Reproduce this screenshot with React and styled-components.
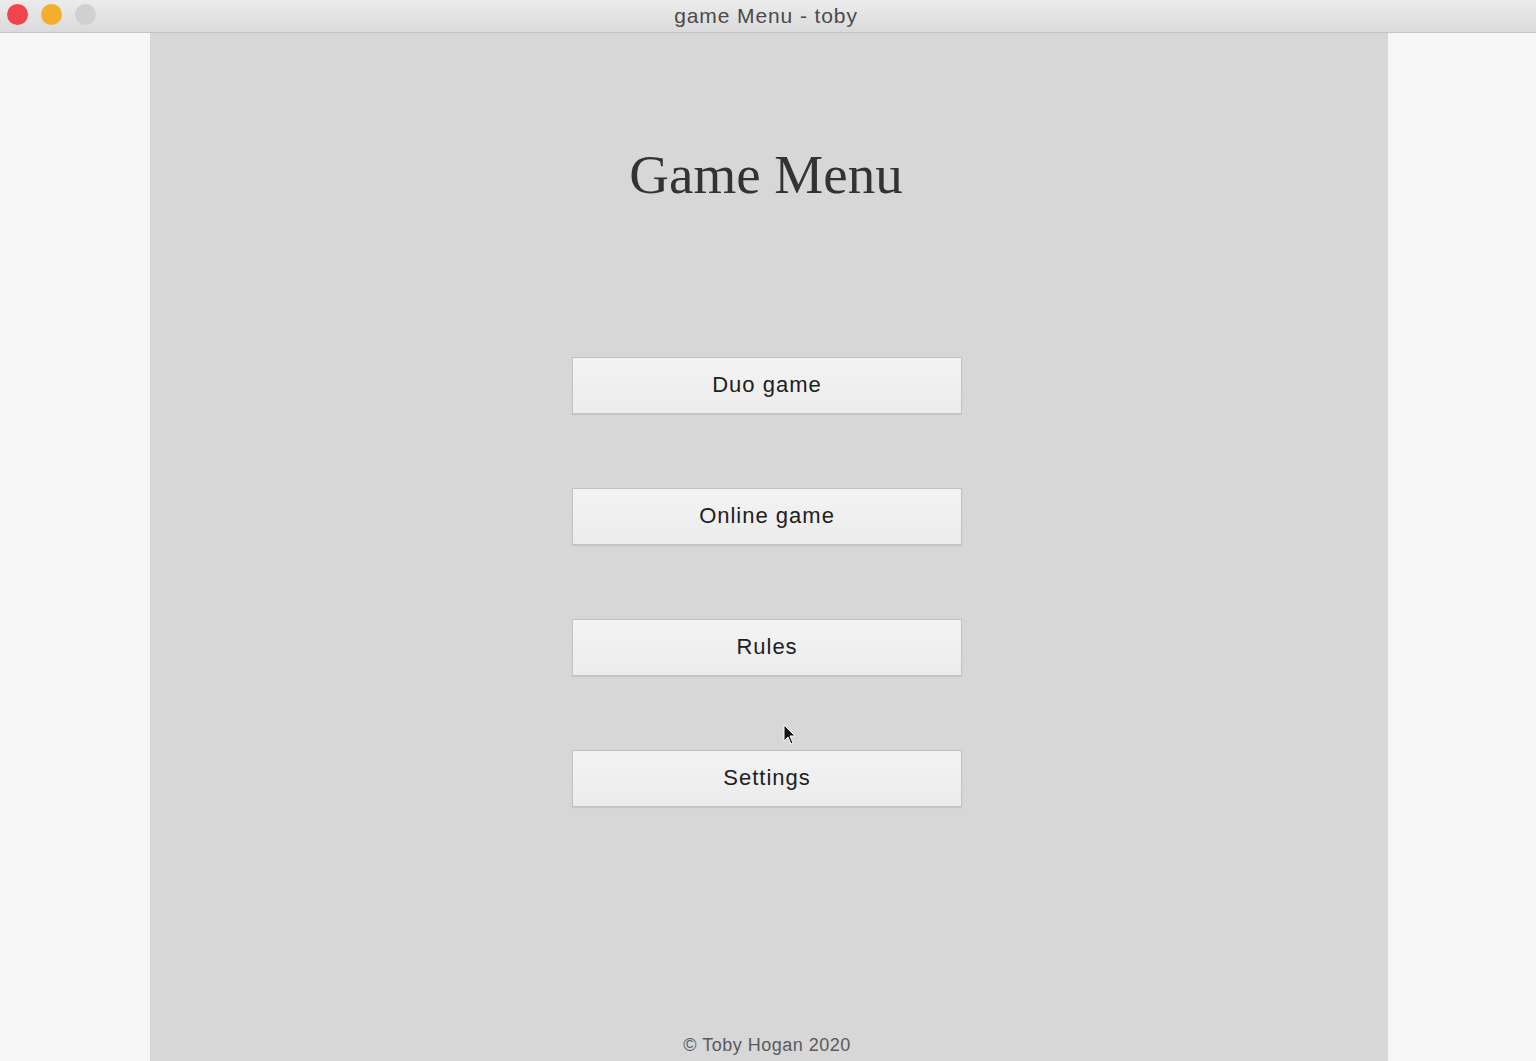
import React from "react";
import styled, { createGlobalStyle } from "styled-components";

const GlobalStyle = createGlobalStyle`
  html, body {
    margin: 0;
    padding: 0;
    background: #f6f6f6;
  }
  #root {
    height: 1061px;
  }
`;

const Window = styled.div`
  display: flex;
  flex-direction: column;
  height: 1061px;
  overflow: hidden;
  font-family: "Liberation Sans", Arial, sans-serif;
`;

const TitleBar = styled.div`
  position: relative;
  height: 32px;
  flex-shrink: 0;
  display: flex;
  align-items: center;
  justify-content: center;
  background: linear-gradient(#ececec, #dadada);
  border-bottom: 1px solid #c4c4c4;
`;

const Lights = styled.div`
  position: absolute;
  left: 7px;
  top: 4px;
  display: flex;
  gap: 13px;
`;

const Light = styled.span`
  width: 21px;
  height: 21px;
  border-radius: 50%;
  background: ${(p) => p.color};
`;

const WindowTitle = styled.div`
  font-size: 21px;
  color: #4a4a4a;
  letter-spacing: 0.9px;
  margin-right: 4px;
`;

const Body = styled.div`
  flex: 1;
  display: flex;
  justify-content: center;
  background: #f6f6f6;
`;

const Panel = styled.main`
  position: relative;
  width: 1238px;
  margin-left: 2px;
  background: #d7d7d7;
  display: flex;
  flex-direction: column;
  align-items: center;
`;

const Heading = styled.h1`
  margin: 110px 6px 0 0;
  font-family: "Liberation Serif", "Times New Roman", serif;
  font-weight: 400;
  font-size: 55px;
  line-height: 64px;
  color: #333;
`;

const Menu = styled.nav`
  margin: 150px 4px 0 0;
  display: flex;
  flex-direction: column;
  gap: 74px;
`;

const MenuButton = styled.button`
  width: 390px;
  height: 57px;
  padding: 0 0 1px;
  border: 1px solid #c2c2c2;
  background: linear-gradient(#f3f3f3, #ececec);
  box-shadow: 0 1px 1px rgba(0, 0, 0, 0.08);
  font-family: "Liberation Sans", Arial, sans-serif;
  font-size: 22px;
  letter-spacing: 1px;
  color: #202020;
  cursor: pointer;
`;

const Footer = styled.footer`
  margin: auto 4px 5px 0;
  font-size: 18px;
  color: #5a5a5a;
  letter-spacing: 0.5px;
`;

const Cursor = styled.svg`
  position: absolute;
  left: 633px;
  top: 691px;
`;

export default function App() {
  const items = ["Duo game", "Online game", "Rules", "Settings"];
  return (
    <>
      <GlobalStyle />
      <Window>
        <TitleBar>
          <Lights>
            <Light color="#f2454b" />
            <Light color="#f5ae2c" />
            <Light color="#d0d0d0" />
          </Lights>
          <WindowTitle>game Menu - toby</WindowTitle>
        </TitleBar>
        <Body>
          <Panel>
            <Heading>Game Menu</Heading>
            <Menu>
              {items.map((label) => (
                <MenuButton key={label}>{label}</MenuButton>
              ))}
            </Menu>
            <Footer>© Toby Hogan 2020</Footer>
            <Cursor width="16" height="24" viewBox="0 0 16 24">
              <path d="M1 1 L1 17 L5 13 L8 20 L10 19 L7 12 L12 12 Z" fill="#111" stroke="#fff" strokeWidth="1" />
            </Cursor>
          </Panel>
        </Body>
      </Window>
    </>
  );
}
